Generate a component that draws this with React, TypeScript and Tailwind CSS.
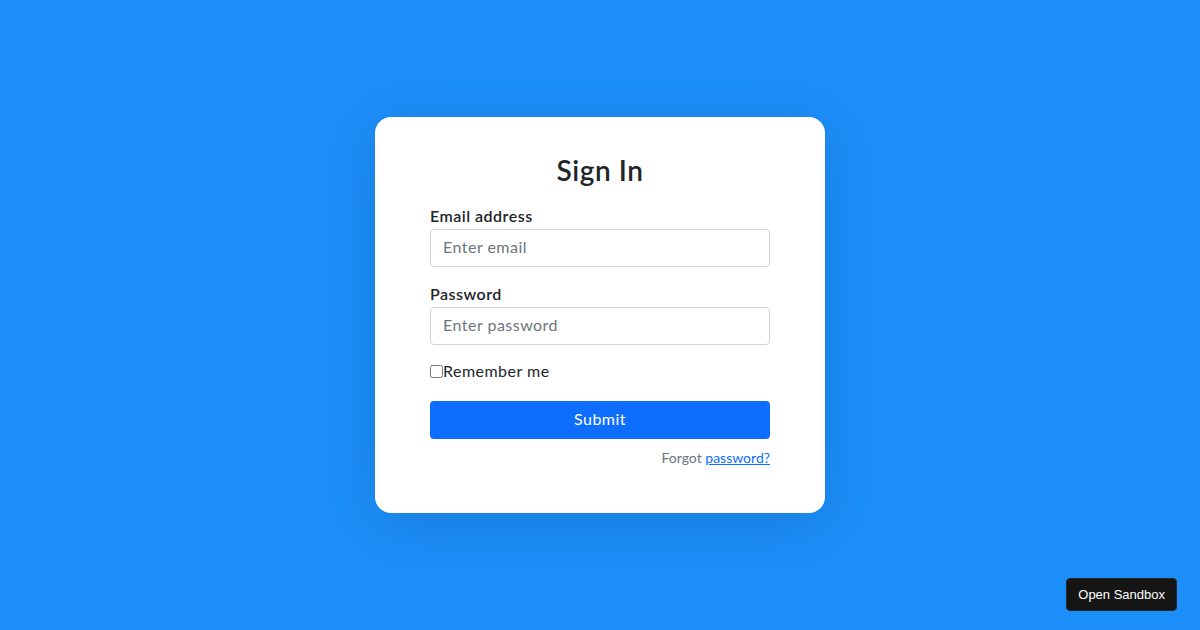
import React from 'react';

const App: React.FC = () => {
    return (
        <div className="relative flex h-[630px] w-full items-center justify-center bg-[#1c8ffa] font-['Lato','Open_Sans',sans-serif] tracking-[0.03em] overflow-hidden">
            <div className="w-[450px] h-[396px] bg-white rounded-2xl shadow-[0_10px_60px_rgba(0,0,0,0.14)] px-[55px] pt-[36px]">
                <h1 className="text-[#212529] text-[28px] font-semibold leading-[34px] text-center tracking-[0.02em]">Sign In</h1>
                <form className="flex flex-col mt-[17px]">
                    <label className="text-[#212529] text-base font-semibold leading-6 mb-px">Email address</label>
                    <input
                        className="h-[38px] w-full rounded border border-[#ced4da] px-3 pb-[3px] text-base text-[#212529] placeholder:text-[#6c757d] outline-none tracking-[0.03em]"
                        placeholder="Enter email"
                        type="email"
                    />
                    <label className="text-[#212529] text-base font-semibold leading-6 mt-[15px] mb-px">Password</label>
                    <input
                        className="h-[38px] w-full rounded border border-[#ced4da] px-3 pb-[3px] text-base text-[#212529] placeholder:text-[#6c757d] outline-none tracking-[0.03em]"
                        placeholder="Enter password"
                        type="password"
                    />
                    <label className="flex items-center mt-[14px] h-6 text-base text-[#212529]">
                        <input type="checkbox" className="w-[13px] h-[13px] m-0" />
                        <span>Remember me</span>
                    </label>
                    <button
                        type="button"
                        className="mt-[18px] h-[38px] w-full rounded bg-[#0d6efd] text-white text-base pb-[3px] tracking-[0.03em]"
                    >
                        Submit
                    </button>
                    <p className="mt-2 text-right text-sm leading-[21px] text-[#6c757d] tracking-normal">
                        Forgot{' '}
                        <a className="text-[#0d6efd] underline" href="#">
                            password?
                        </a>
                    </p>
                </form>
            </div>
            <button className="absolute right-[23px] bottom-[19px] h-[33px] px-[11px] rounded bg-[#151515] border border-[#2a2a2a] text-white text-[13px] tracking-normal font-['Liberation_Sans',sans-serif]">
                Open Sandbox
            </button>
        </div>
    );
};

export default App;
